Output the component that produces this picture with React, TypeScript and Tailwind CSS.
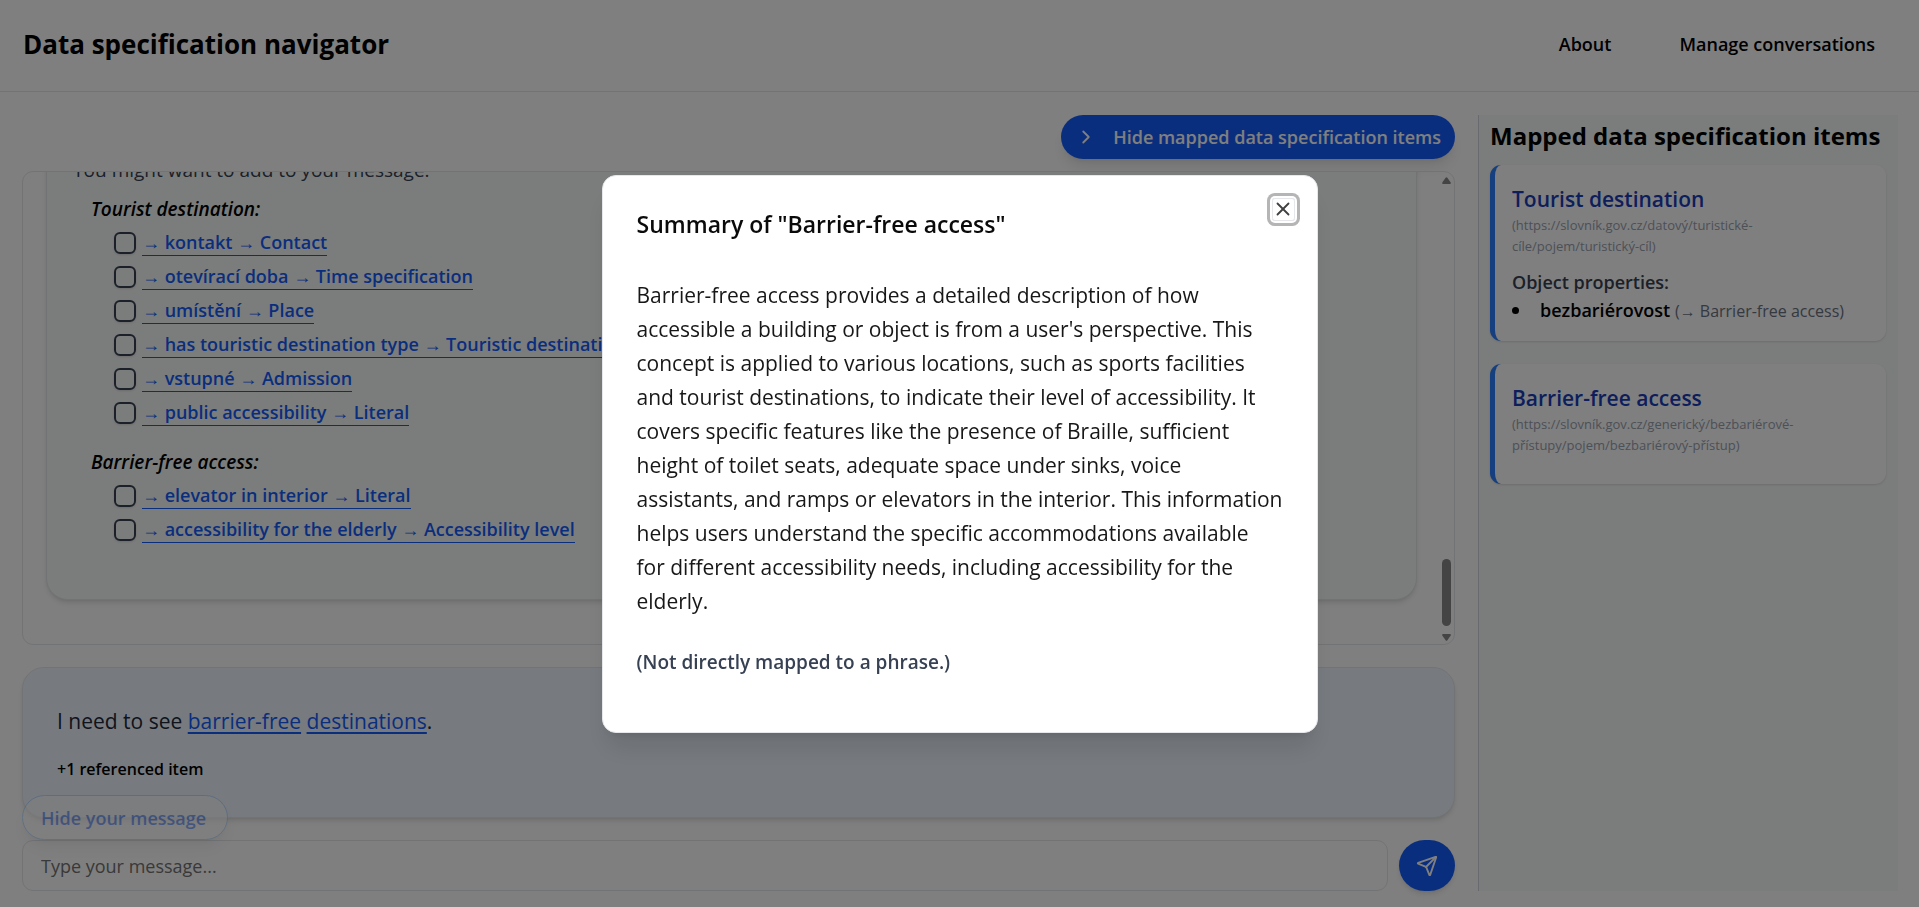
import React from "react";
import { ChevronRight, Send, X } from "lucide-react";

const suggestions = [
  {
    heading: "Tourist destination:",
    items: [
      "→ kontakt → Contact",
      "→ otevírací doba → Time specification",
      "→ umístění → Place",
      "→ has touristic destination type → Touristic destination type",
      "→ vstupné → Admission",
      "→ public accessibility → Literal",
    ],
  },
  {
    heading: "Barrier-free access:",
    items: [
      "→ elevator in interior → Literal",
      "→ accessibility for the elderly → Accessibility level",
    ],
  },
];

type MappedItem = {
  name: string;
  iri: string;
  properties: { name: string; target: string }[];
};

const mappedItems: MappedItem[] = [
  {
    name: "Tourist destination",
    iri: "(https://slovník.gov.cz/datový/turistické-cíle/pojem/turistický-cíl)",
    properties: [{ name: "bezbariérovost", target: "(→ Barrier-free access)" }],
  },
  {
    name: "Barrier-free access",
    iri: "(https://slovník.gov.cz/generický/bezbariérové-přístupy/pojem/bezbariérový-přístup)",
    properties: [],
  },
];

function Header() {
  return (
    <header className="flex h-[92px] shrink-0 items-center justify-between border-b border-gray-200 pr-11 pb-1 pl-[23px]">
      <h1 className="text-[26px] leading-9 font-bold">Data specification navigator</h1>
      <nav className="flex gap-[68px] text-lg font-semibold">
        <a href="#about">About</a>
        <a href="#conversations">Manage conversations</a>
      </nav>
    </header>
  );
}

function ScrollBar() {
  return (
    <div aria-hidden="true" className="mt-[5px] mr-[3px] mb-[3px] flex w-[9px] shrink-0 flex-col items-center">
      <svg viewBox="0 0 9 7" className="h-[7px] w-[9px] fill-[#888888]">
        <path d="M3.6.7Q4.5-.4 5.4.7L8.7 5.4Q9.3 7 7.8 7H1.2Q-.3 7 .3 5.4Z" />
      </svg>
      <div className="mt-auto h-[67px] w-full rounded-full bg-[#888888]" />
      <svg viewBox="0 0 9 7" className="mt-2 h-[7px] w-[9px] fill-[#888888]">
        <path d="M3.6 6.3Q4.5 7.4 5.4 6.3L8.7 1.6Q9.3 0 7.8 0H1.2Q-.3 0 .3 1.6Z" />
      </svg>
    </div>
  );
}

function ChatHistory() {
  return (
    <section className="mt-3 flex min-h-0 flex-1 rounded-[11px] border border-gray-200">
      <div className="flex min-h-0 flex-1 flex-col justify-end overflow-hidden pr-[25px] pb-11 pl-[23px]">
        <div className="shrink-0 rounded-[22px] border border-gray-200 bg-[#f7faf8] px-[26px] pt-6 pb-[52px] shadow-md">
          <p className="mb-[5px] text-[19px] leading-[34px] text-gray-700">You might want to add to your message.</p>
          <div className="flex flex-col gap-[15px] pl-[18px]">
            {suggestions.map((group) => (
              <div key={group.heading}>
                <h3 className="text-[19px] leading-[34px] font-semibold italic">{group.heading}</h3>
                <ul className="pl-[23px]">
                  {group.items.map((item) => (
                    <li key={item} className="flex h-[34px] items-center gap-[6px]">
                      <input
                        type="checkbox"
                        aria-label={item}
                        className="size-[22px] shrink-0 appearance-none rounded-[6px] border-2 border-gray-700 shadow-sm"
                      />
                      <a href="#item" className="border-b border-blue-600 text-lg leading-[25px] font-semibold text-blue-600">
                        {item}
                      </a>
                    </li>
                  ))}
                </ul>
              </div>
            ))}
          </div>
        </div>
      </div>
      <ScrollBar />
    </section>
  );
}

function PendingMessage() {
  return (
    <section className="relative mt-[22px] shrink-0 rounded-[22px] border border-gray-200 bg-blue-50 px-[34px] py-9 shadow-md">
      <p className="text-[21px] leading-[34px] text-gray-800">
        I need to see{" "}
        <a href="#barrier-free" className="text-blue-600 underline decoration-2 underline-offset-[3px]">barrier-free</a>{" "}
        <a href="#destinations" className="text-blue-600 underline decoration-2 underline-offset-[3px]">destinations</a>.
      </p>
      <p className="mt-[19px] text-base font-semibold">+1 referenced item</p>
      <button
        type="button"
        className="absolute -bottom-[23px] -left-px h-[45px] rounded-full border border-blue-300 bg-white pr-[21px] pl-[18px] text-lg font-semibold text-blue-600 opacity-50 shadow-lg"
      >
        Hide your message
      </button>
    </section>
  );
}

function Sidebar() {
  return (
    <aside className="w-[420px] shrink-0 border-l border-gray-300 bg-[#f7faf8] pt-[3px] pr-3 pl-[11px]">
      <h2 className="text-2xl leading-9 font-bold whitespace-nowrap">Mapped data specification items</h2>
      <div className="mt-[11px] flex flex-col gap-[23px]">
        {mappedItems.map((item) => (
          <article key={item.name} className="rounded-[11px] border-l-[5px] border-blue-500 bg-white px-[17px] pt-5 pb-[17px] shadow-sm">
            <h3 className="text-[21px] leading-7 font-semibold text-blue-800">{item.name}</h3>
            <p className="mt-[2px] text-[13px] leading-[21px] text-gray-400">{item.iri}</p>
            <div className="mt-[11px]">
              {item.properties.length > 0 && (
                <>
                  <h4 className="text-lg leading-7 font-semibold text-gray-700">Object properties:</h4>
                  <ul>
                    {item.properties.map((property) => (
                      <li key={property.name} className="flex items-center">
                        <span className="mr-[21px] size-[7px] rounded-full bg-black" />
                        <span className="text-lg leading-7 font-semibold">
                          {property.name} <span className="text-base font-normal text-gray-500">{property.target}</span>
                        </span>
                      </li>
                    ))}
                  </ul>
                </>
              )}
            </div>
          </article>
        ))}
      </div>
    </aside>
  );
}

function SummaryDialog() {
  return (
    <div className="fixed inset-0 flex items-center justify-center bg-black/50">
      <div
        role="dialog"
        aria-modal="true"
        aria-labelledby="summary-title"
        className="relative w-full max-w-[716px] rounded-[14px] border border-gray-200 bg-white pt-8 pr-[33px] pb-14 pl-[34px] shadow-xl"
      >
        <h2 id="summary-title" className="text-[23px] leading-8 font-semibold text-neutral-950">
          Summary of "Barrier-free access"
        </h2>
        <button
          type="button"
          aria-label="Close"
          className="absolute top-[22px] right-[22px] flex size-[23px] items-center justify-center rounded-[3px] border border-gray-200 text-neutral-700 ring-3 ring-[#b5b5b5] ring-offset-2"
        >
          <X className="size-[22px] shrink-0" />
        </button>
        <p className="mt-[38px] text-[21px] leading-[34px] text-neutral-900">
          Barrier-free access provides a detailed description of how accessible a building or object is from a user's
          perspective. This concept is applied to various locations, such as sports facilities and tourist destinations,
          to indicate their level of accessibility. It covers specific features like the presence of Braille, sufficient
          height of toilet seats, adequate space under sinks, voice assistants, and ramps or elevators in the interior.
          This information helps users understand the specific accommodations available for&nbsp;different accessibility
          needs, including accessibility for the elderly.
        </p>
        <p className="mt-[30px] text-[19px] leading-7 font-semibold text-gray-700">(Not directly mapped to a phrase.)</p>
      </div>
    </div>
  );
}

export default function App() {
  return (
    <div className="flex h-screen flex-col bg-white font-['Open_Sans',sans-serif] text-black">
      <Header />
      <main className="flex min-h-0 flex-1 gap-[23px] pt-[23px] pr-[21px] pb-4 pl-[22px]">
        <div className="flex min-w-0 flex-1 flex-col">
          <button
            type="button"
            className="flex h-11 shrink-0 items-center gap-4 self-end rounded-full bg-blue-600 pr-[14px] pl-[14px] text-lg font-semibold text-white shadow-lg"
          >
            <ChevronRight className="size-[22px]" />
            Hide mapped data specification items
          </button>
          <ChatHistory />
          <PendingMessage />
          <form className="mt-[22px] flex h-[51px] shrink-0 gap-[11px]">
            <input
              type="text"
              aria-label="Message"
              placeholder="Type your message..."
              className="min-w-0 flex-1 rounded-[11px] border border-gray-200 px-[18px] text-lg placeholder:text-neutral-500"
            />
            <button
              type="button"
              aria-label="Send"
              className="flex w-14 items-center justify-center rounded-full bg-blue-600 text-white shadow-md"
            >
              <Send className="size-[22px]" />
            </button>
          </form>
        </div>
        <Sidebar />
      </main>
      <SummaryDialog />
    </div>
  );
}
